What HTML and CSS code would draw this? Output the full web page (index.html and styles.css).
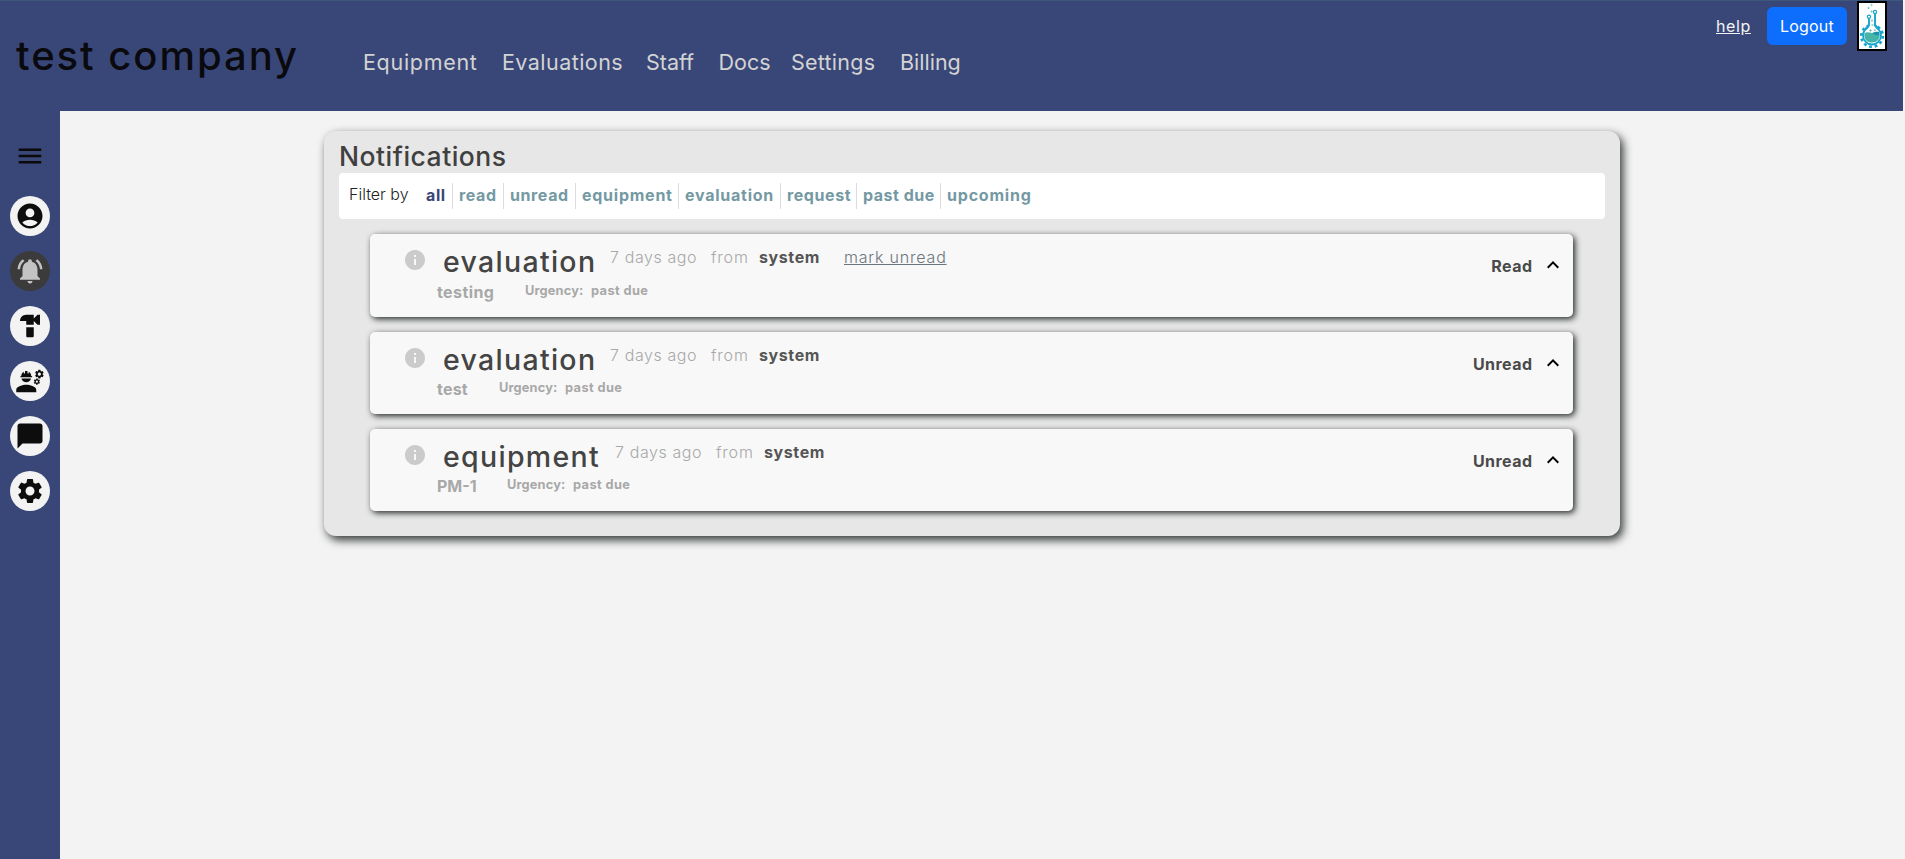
FILE: index.html
```html
<!DOCTYPE html>
<html lang="en">
<head>
<meta charset="utf-8">
<title>Notifications</title>
<link rel="stylesheet" href="styles.css">
</head>
<body>
<header class="topbar">
  <h1 class="brand"><span>test company</span></h1>
  <nav class="nav">
    <a class="w-equipment">Equipment</a>
    <a class="w-evaluations">Evaluations</a>
    <a class="w-staff">Staff</a>
    <a class="w-docs">Docs</a>
    <a class="w-settings">Settings</a>
    <a class="w-billing">Billing</a>
  </nav>
  <div class="account">
    <a class="help">help</a>
    <button class="logout">Logout</button>
    <div class="logo">
      <svg viewBox="0 0 26 46" width="26" height="46">
        <path d="M12.500 .5v3M11 2h3" stroke="#a5d8e2" stroke-width="1" fill="none"/>
        <path d="M9.500 4v2M8.500 5h2M12.500 7.500v2M11.500 8.500h2" stroke="#6cc5cf" stroke-width="1" fill="none"/>
        <circle cx="13" cy="33" r="10.800" fill="none" stroke="#16a5cb" stroke-width="2.600" stroke-dasharray="2.800 2.855"/>
        <circle cx="13" cy="32.500" r="9" fill="#fff" stroke="#16a5cb" stroke-width="1.800"/>
        <path d="M10.800 16h4.400v7l3 4H7.800l3-4z" fill="#fff"/>
        <path d="M10 15.500v6.500l-4 4.500M16 10.500v11.500l4 4.500" stroke="#16a5cb" stroke-width="1.900" fill="none"/>
        <circle cx="10" cy="13.700" r="1.600" fill="#fff" stroke="#16a5cb" stroke-width="1.200"/>
        <circle cx="16" cy="9" r="1.600" fill="#fff" stroke="#16a5cb" stroke-width="1.200"/>
        <path d="M5.500 30c3-1.200 5-.6 7.500 0s5 .8 7.500-.5c1.500 7-3 10-7.500 10S4.500 37 5.500 30z" fill="#45b5aa"/>
        <path d="M13 30c3-1.200 5-1.500 7-1v3c-3 .7-5-.5-7-2z" fill="#1892ad"/>
        <path d="M13 16.500v2M12.500 22h2M11.500 26.500v2M10.500 27.500h2M15 27h2" stroke="#45b5aa" stroke-width="1.200"/>
      </svg>
    </div>
  </div>
</header>
<div class="body">
  <aside class="sidebar">
    <svg class="menu" viewBox="0 0 24 24"><path d="M3 18h18v-2H3v2zm0-5h18v-2H3v2zm0-7v2h18V6H3z"/></svg>
    <div class="side-icon"><svg viewBox="0 0 24 24"><path d="M12 2C6.480 2 2 6.480 2 12s4.480 10 10 10 10-4.480 10-10S17.520 2 12 2zm0 4c1.930 0 3.500 1.570 3.500 3.500S13.930 13 12 13s-3.500-1.570-3.500-3.500S10.070 6 12 6zm0 14c-2.030 0-4.430-.82-6.140-2.880C7.550 15.800 9.680 15 12 15s4.450.8 6.140 2.120C16.430 19.180 14.030 20 12 20z"/></svg></div>
    <div class="side-icon active"><svg viewBox="0 0 24 24"><path d="M7.580 4.080 6.150 2.650C3.750 4.480 2.170 7.300 2.030 10.500h2c.15-2.650 1.510-4.970 3.550-6.420zm12.390 6.420h2c-.15-3.200-1.730-6.020-4.120-7.850l-1.420 1.430c2.020 1.450 3.390 3.770 3.540 6.420zM18 11c0-3.070-1.640-5.640-4.500-6.320V4c0-.83-.67-1.500-1.500-1.500s-1.500.67-1.500 1.500v.68C7.630 5.360 6 7.920 6 11v5l-2 2v1h16v-1l-2-2v-5zm-6 11c.14 0 .27-.01.4-.04.65-.14 1.180-.58 1.440-1.180.1-.24.15-.5.15-.78h-4c.01 1.100.9 2 2.010 2z"/></svg></div>
    <div class="side-icon"><svg viewBox="0 0 24 24"><path d="m18 3-3 3V3H9C6.240 3 4 5.240 4 8h5v3h6V8l3 3h2V3zM9 13v7c0 .55.45 1 1 1h4c.55 0 1-.45 1-1v-7z"/></svg></div>
    <div class="side-icon"><svg viewBox="0 0 24 24"><path d="M9 15c-2.670 0-8 1.340-8 4v2h16v-2c0-2.660-5.330-4-8-4zM22.100 6.840c.01-.11.02-.22.02-.34 0-.12-.01-.23-.03-.34l.74-.58c.07-.05.08-.15.04-.22l-.7-1.210c-.04-.08-.14-.1-.21-.08l-.86.35c-.18-.14-.38-.25-.59-.34l-.13-.93c-.02-.09-.09-.15-.18-.15h-1.400c-.09 0-.16.06-.17.15l-.13.93c-.21.09-.41.21-.59.34l-.87-.35c-.08-.03-.17 0-.21.08l-.7 1.210c-.04.08-.03.17.04.22l.74.58c-.02.11-.03.23-.03.34 0 .11.01.23.03.34l-.74.58c-.07.05-.08.15-.04.22l.7 1.210c.04.08.14.1.21.08l.87-.35c.18.14.38.25.59.34l.13.93c.01.09.08.15.17.15h1.400c.09 0 .16-.06.17-.15l.13-.93c.21-.09.41-.21.59-.34l.87.35c.08.03.17 0 .21-.08l.7-1.210c.04-.08.03-.17-.04-.22l-.73-.58zm-2.600.91c-.69 0-1.250-.56-1.250-1.250s.56-1.250 1.250-1.250 1.250.56 1.250 1.250-.56 1.250-1.250 1.250zM19.920 11.680l-.5-.87c-.03-.06-.1-.08-.15-.06l-.62.25c-.13-.1-.27-.18-.42-.24l-.09-.66c-.02-.06-.08-.1-.14-.1h-1c-.06 0-.11.04-.12.11l-.09.66c-.15.06-.29.15-.42.24l-.62-.25c-.06-.02-.12 0-.15.06l-.5.87c-.03.06-.02.12.03.16l.53.41c-.01.08-.02.16-.02.24 0 .08.01.17.02.24l-.53.41c-.05.04-.06.11-.03.16l.5.87c.03.06.1.08.15.06l.62-.25c.13.1.27.18.42.24l.09.66c.01.07.06.11.12.11h1c.06 0 .12-.04.12-.11l.09-.66c.15-.06.29-.15.42-.24l.62.25c.06.02.12 0 .15-.06l.5-.87c.03-.06.02-.12-.03-.16l-.52-.41c.01-.08.02-.16.02-.24 0-.08-.01-.17-.02-.24l.53-.41c.05-.04.06-.11.04-.17zm-2.420 1.650c-.46 0-.83-.38-.83-.83 0-.46.38-.83.83-.83s.83.38.83.83c0 .46-.37.83-.83.83zM4.740 9h8.530c.27 0 .49-.22.49-.49v-.02c0-.27-.22-.49-.49-.49H13c0-1.480-.81-2.750-2-3.450v.95c0 .28-.22.5-.5.5s-.5-.22-.5-.5V4.140C9.680 4.060 9.350 4 9 4s-.68.06-1 .14V5.500c0 .28-.22.5-.5.5S7 5.780 7 5.500v-.95C5.810 5.250 5 6.520 5 8h-.26c-.27 0-.49.22-.49.49v.03c0 .26.22.48.49.48zM9 13c1.860 0 3.410-1.280 3.860-3H5.140c.45 1.720 2 3 3.860 3z"/></svg></div>
    <div class="side-icon"><svg viewBox="0 0 24 24"><path d="M20 2H4c-1.100 0-2 .9-2 2v18l4-4h14c1.100 0 2-.9 2-2V4c0-1.100-.9-2-2-2z"/></svg></div>
    <div class="side-icon"><svg viewBox="0 0 24 24"><path d="M19.140 12.940c.04-.3.06-.61.06-.94 0-.32-.02-.64-.07-.94l2.030-1.580c.18-.14.23-.41.12-.61l-1.920-3.320c-.12-.22-.37-.29-.59-.22l-2.390.96c-.5-.38-1.030-.7-1.620-.94l-.36-2.540c-.04-.24-.24-.41-.48-.41h-3.840c-.24 0-.43.17-.47.41l-.36 2.540c-.59.24-1.130.57-1.620.94l-2.390-.96c-.22-.08-.47 0-.59.22L2.740 8.870c-.12.21-.08.47.12.61l2.030 1.580c-.05.3-.09.63-.09.94s.02.64.07.94l-2.030 1.580c-.18.14-.23.41-.12.61l1.920 3.320c.12.22.37.29.59.22l2.390-.96c.5.38 1.030.7 1.620.94l.36 2.540c.05.24.24.41.48.41h3.840c.24 0 .44-.17.47-.41l.36-2.540c.59-.24 1.130-.56 1.620-.94l2.390.96c.22.08.47 0 .59-.22l1.920-3.320c.12-.22.07-.47-.12-.61l-2.010-1.580zM12 15.600c-1.980 0-3.600-1.620-3.600-3.600s1.620-3.600 3.600-3.600 3.600 1.620 3.600 3.600-1.620 3.600-3.600 3.600z"/></svg></div>
  </aside>
  <main class="content">
    <section class="panel">
      <h2 class="panel-title">Notifications</h2>
      <div class="filters">
        <span class="filter-label">Filter by</span>
        <a class="filter selected f-all">all</a>
        <a class="filter f-read">read</a>
        <a class="filter f-unread">unread</a>
        <a class="filter f-equipment">equipment</a>
        <a class="filter f-evaluation">evaluation</a>
        <a class="filter f-request">request</a>
        <a class="filter f-past">past due</a>
        <a class="filter f-upcoming">upcoming</a>
      </div>
      <div class="list">
        <article class="card">
          <svg class="info" viewBox="0 0 24 24"><path d="M12 2C6.480 2 2 6.480 2 12s4.480 10 10 10 10-4.480 10-10S17.520 2 12 2zm1 15h-2v-6h2v6zm0-8h-2V7h2v2z"/></svg>
          <div class="detail">
            <div class="line"><h3 class="kind k-evaluation">evaluation</h3><span class="ago">7 days ago</span><span class="from">from</span><b class="sender">system</b><a class="mark">mark unread</a></div>
            <div class="sub"><b class="name n-testing">testing</b><b class="urgency">Urgency:</b><b class="due">past due</b></div>
          </div>
          <div class="state"><b>Read</b><svg class="chev" viewBox="0 0 24 24"><path d="m12 8-6 6 1.410 1.410L12 10.830l4.590 4.580L18 14z"/></svg></div>
        </article>
        <article class="card">
          <svg class="info" viewBox="0 0 24 24"><path d="M12 2C6.480 2 2 6.480 2 12s4.480 10 10 10 10-4.480 10-10S17.520 2 12 2zm1 15h-2v-6h2v6zm0-8h-2V7h2v2z"/></svg>
          <div class="detail">
            <div class="line"><h3 class="kind k-evaluation">evaluation</h3><span class="ago">7 days ago</span><span class="from">from</span><b class="sender">system</b></div>
            <div class="sub"><b class="name n-test">test</b><b class="urgency">Urgency:</b><b class="due">past due</b></div>
          </div>
          <div class="state"><b>Unread</b><svg class="chev" viewBox="0 0 24 24"><path d="m12 8-6 6 1.410 1.410L12 10.830l4.590 4.580L18 14z"/></svg></div>
        </article>
        <article class="card">
          <svg class="info" viewBox="0 0 24 24"><path d="M12 2C6.480 2 2 6.480 2 12s4.480 10 10 10 10-4.480 10-10S17.520 2 12 2zm1 15h-2v-6h2v6zm0-8h-2V7h2v2z"/></svg>
          <div class="detail">
            <div class="line"><h3 class="kind k-equipment">equipment</h3><span class="ago">7 days ago</span><span class="from">from</span><b class="sender">system</b></div>
            <div class="sub"><b class="name n-pm">PM-1</b><b class="urgency">Urgency:</b><b class="due">past due</b></div>
          </div>
          <div class="state"><b>Unread</b><svg class="chev" viewBox="0 0 24 24"><path d="m12 8-6 6 1.410 1.410L12 10.830l4.590 4.580L18 14z"/></svg></div>
        </article>
      </div>
    </section>
  </main>
</div>
</body>
</html>
```
FILE: styles.css
```css
* { box-sizing: border-box; }
body {
  margin: 0;
  height: 859px;
  display: flex;
  flex-direction: column;
  overflow: hidden;
  background: #f3f3f3;
  font: 16px/24px Inter, "Liberation Sans", sans-serif;
  color: #222;
}
h1, h2, h3 { margin: 0; font-weight: 400; }
a, span, b, h1, h3 { white-space: nowrap; }

.topbar {
  flex: none;
  display: flex;
  align-items: flex-start;
  width: 1903px;
  height: 111px;
  padding-left: 16px;
  background: #394778;
  border-top: 1px solid #3c587d;
}
.brand {
  width: 347px;
  padding-top: 25px;
  font-size: 40px;
  font-weight: 450;
  line-height: 60px;
  letter-spacing: 1.950px;
  color: #0a0a0e;
}
.nav {
  display: flex;
  padding-top: 45px;
  font-size: 21.500px;
  line-height: 32px;
  color: #d3d3d3;
}
.w-equipment { width: 139px; letter-spacing: .7px; }
.w-evaluations { width: 144px; letter-spacing: .45px; }
.w-staff { width: 72.500px; }
.w-docs { width: 72.500px; }
.w-settings { width: 109px; letter-spacing: .25px; }

.account { display: flex; align-items: flex-start; margin-left: auto; padding-right: 16px; }
.help { width: 51px; padding-top: 13px; letter-spacing: .6px; color: #f3f3f3; text-decoration: underline; }
.logout {
  width: 80px;
  height: 38px;
  margin: 6px 10px 0 0;
  padding: 0;
  border: 0;
  border-radius: 6px;
  background: #0d6efd;
  color: #fff;
  font: inherit;
  letter-spacing: .2px;
}
.logo { width: 30px; height: 50px; border: 2px solid #000; background: #fff; }
.logo svg { display: block; }

.body { flex: 1; display: flex; }
.sidebar {
  width: 60px;
  padding-top: 30px;
  display: flex;
  flex-direction: column;
  align-items: center;
  gap: 15px;
  background: #394778;
}
.menu { width: 30px; height: 30px; margin-bottom: 10px; fill: #0a0a0a; }
.side-icon {
  display: grid;
  place-items: center;
  width: 40px;
  height: 40px;
  border-radius: 50%;
  background: #f3f3f3;
}
.side-icon svg { width: 30px; height: 30px; fill: #0d0d0d; }
.active { background: #3b3b3b; }
.active svg { fill: #c3c3c3; }

.content { padding: 20px 0 0 264px; }
.panel {
  width: 1296px;
  height: 405px;
  padding: 8px 15px 0;
  border-radius: 12px;
  background: #e7e7e7;
  box-shadow: 3px 4px 10px #2f3532;
}
.panel-title {
  height: 34px;
  font-size: 26.500px;
  font-weight: 450;
  line-height: 35px;
  letter-spacing: .5px;
  color: #404040;
}
.filters {
  display: flex;
  height: 46px;
  padding: 10px;
  border-radius: 4px;
  background: #fff;
}
.filter-label { width: 70px; line-height: 23px; font-weight: 350; }
.filter {
  height: 26px;
  padding-left: 6px;
  border-right: 1px solid #dcdcdc;
  line-height: 24px;
  font-weight: 700;
  letter-spacing: .6px;
  color: #7499a3;
}
.selected { color: #394778; }
.f-all { width: 34px; padding-left: 7px; }
.f-read { width: 51px; }
.f-unread { width: 72px; }
.f-equipment { width: 103px; letter-spacing: .75px; }
.f-evaluation { width: 102px; letter-spacing: .75px; }
.f-request { width: 76px; }
.f-past { width: 84px; letter-spacing: .5px; }
.f-upcoming { border: 0; letter-spacing: .8px; }

.list { padding: 15px 32px 0 31px; display: flex; flex-direction: column; gap: 15px; }
.card {
  display: flex;
  height: 82px;
  padding-left: 33px;
  border-radius: 5px;
  background: #f8f8f8;
  box-shadow: 2px 2px 6px #222826;
}
.card:first-child { height: 83px; }
.info { flex: none; width: 24px; height: 24px; margin-top: 14px; fill: #cbcbcb; }
.detail { padding: 10px 0 0 10px; }
.line { display: flex; height: 37px; padding-left: 5px; color: #a8a8a8; }
.kind {
  padding-left: 1px;
  font-size: 28.500px;
  font-weight: 450;
  line-height: 36px;
  letter-spacing: 1.300px;
  color: #444;
}
.k-evaluation { width: 168px; }
.k-equipment { width: 173px; }
.line > :not(.kind) { line-height: 26px; }
.ago { width: 101px; font-weight: 350; letter-spacing: .6px; }
.from { width: 48px; font-weight: 350; letter-spacing: .8px; }
.sender { width: 85px; letter-spacing: .6px; color: #555; }
.mark { font-weight: 350; letter-spacing: .8px; color: #6c757d; text-decoration: underline; }
.sub { display: flex; color: #a8a8a8; }
.card:first-child .sub { padding-top: 1px; }
.name { line-height: 21px; }
.n-testing { width: 88px; letter-spacing: .4px; }
.n-test { width: 62px; letter-spacing: .2px; }
.n-pm { width: 70px; }
.urgency, .due { font-size: 12.800px; line-height: 18px; }
.urgency { width: 66px; letter-spacing: .15px; }
.due { letter-spacing: .4px; }
.state {
  display: flex;
  margin-left: auto;
  padding: 20px 8px 0 0;
  gap: 8.500px;
  letter-spacing: .45px;
  color: #4a4a4a;
}
.chev { width: 24px; height: 24px; margin-top: -1px; fill: #000; }
```
